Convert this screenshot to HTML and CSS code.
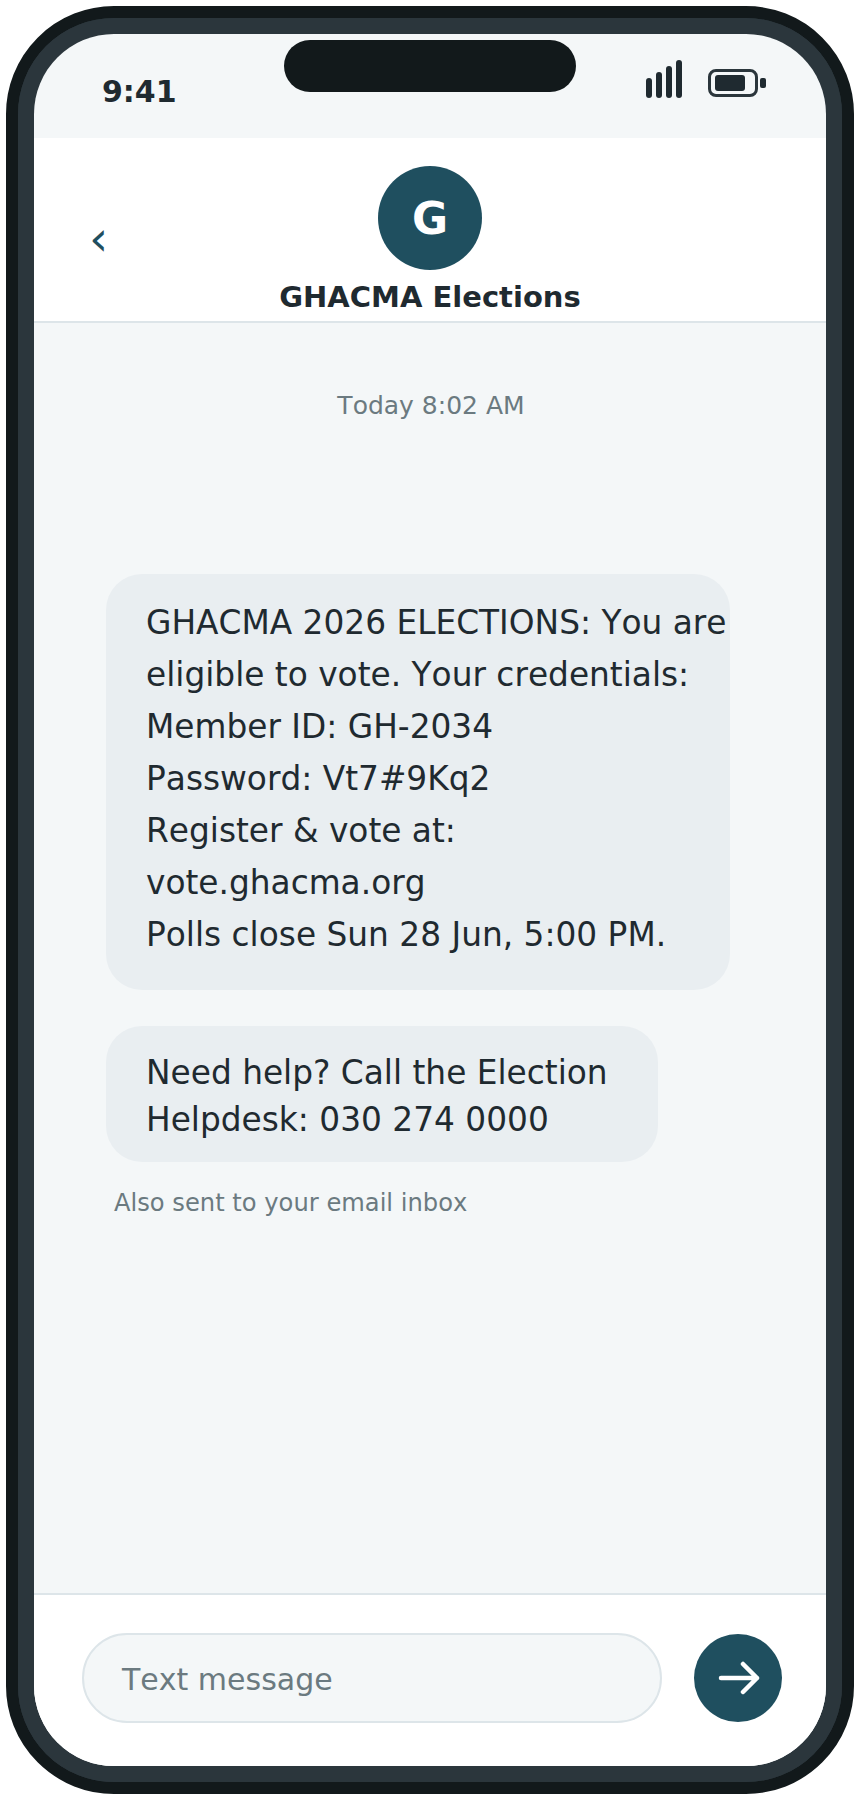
FILE: index.html
```html
<!DOCTYPE html>
<html lang="en">
<head>
  <meta charset="UTF-8" />
  <meta name="viewport" content="width=device-width, initial-scale=1.0"/>
  <title>GHACMA Elections SMS</title>
  <link rel="stylesheet" href="styles.css">
</head>
<body>
  <div class="phone">
    <div class="bezel">
      <div class="screen">
        <div class="notch"></div>

        <div class="status-bar">
          <span class="clock">9:41</span>
          <div class="status-icons">
            <div class="signal">
              <span class="signal-bar s1"></span>
              <span class="signal-bar s2"></span>
              <span class="signal-bar s3"></span>
              <span class="signal-bar s4"></span>
            </div>
            <div class="battery">
              <div class="battery-body"><div class="battery-level"></div></div>
              <div class="battery-tip"></div>
            </div>
          </div>
        </div>

        <div class="chat-header">
          <span class="back">‹</span>
          <div class="contact">
            <div class="avatar">G</div>
            <div class="contact-name">GHACMA Elections</div>
          </div>
        </div>

        <div class="thread">
          <div class="timestamp">Today 8:02 AM</div>
          <div class="bubble bubble-main">
            GHACMA 2026 ELECTIONS: You are<br>
            eligible to vote. Your credentials:<br>
            Member ID: GH-2034<br>
            Password: Vt7#9Kq2<br>
            Register &amp; vote at:<br>
            vote.ghacma.org<br>
            Polls close Sun 28 Jun, 5:00 PM.
          </div>
          <div class="bubble bubble-help">
            Need help? Call the Election<br>
            Helpdesk: 030 274 0000
          </div>
          <div class="note">Also sent to your email inbox</div>
        </div>

        <div class="composer">
          <div class="message-input">Text message</div>
          <div class="send">
            <svg width="44" height="36" viewBox="0 0 44 36" fill="none" stroke="#fff" stroke-width="4.5" stroke-linecap="round" stroke-linejoin="round">
              <path d="M5 18H41M27 4L41 18L27 32"/>
            </svg>
          </div>
        </div>
      </div>
    </div>
  </div>
</body>
</html>
```

FILE: styles.css
```css
* {
  box-sizing: border-box;
}

body {
  margin: 0;
  background: #fff;
  font-family: 'DejaVu Sans', sans-serif;
  font-kerning: none;
  color: #1f2a30;
}

.phone {
  width: 848px;
  height: 1788px;
  margin: 6px;
  border: 12px solid #12191b;
  border-radius: 108px;
  background: #2b363c;
}

.bezel {
  height: 100%;
  border: 16px solid #2b363c;
  border-radius: 96px;
}

.screen {
  position: relative;
  display: flex;
  flex-direction: column;
  height: 100%;
  border-radius: 80px;
  overflow: hidden;
  background: #f4f7f8;
}

.notch {
  position: absolute;
  top: 6px;
  left: 250px;
  width: 292px;
  height: 52px;
  border-radius: 26px;
  background: #12191b;
}

.status-bar {
  display: flex;
  justify-content: space-between;
  height: 104px;
  padding: 26px 60px 0 68px;
  flex-shrink: 0;
}

.clock {
  margin-top: 12px;
  font-size: 30px;
  font-weight: 700;
  line-height: 40px;
}

.status-icons {
  display: flex;
  align-items: flex-end;
  gap: 26px;
  height: 38px;
}

.signal {
  display: flex;
  align-items: flex-end;
  gap: 4px;
}

.signal-bar {
  width: 6px;
  border-radius: 3px;
  background: #1f2a30;
}

.s1 { height: 20px; }
.s2 { height: 26px; }
.s3 { height: 32px; }
.s4 { height: 38px; }

.battery {
  display: flex;
  align-items: center;
  gap: 2px;
  margin-bottom: 1px;
}

.battery-body {
  width: 50px;
  height: 28px;
  padding: 3px 4px;
  border: 3px solid #2b363c;
  border-radius: 8px;
}

.battery-level {
  width: 30px;
  height: 100%;
  border-radius: 3px;
  background: #1f2a30;
}

.battery-tip {
  width: 6px;
  height: 10px;
  border-radius: 2px;
  background: #1f2a30;
}

.chat-header {
  position: relative;
  height: 185px;
  padding-top: 28px;
  flex-shrink: 0;
  background: #fff;
  border-bottom: 2px solid #dde5e9;
}

.back {
  position: absolute;
  left: 55px;
  top: 70px;
  font-size: 48px;
  line-height: 60px;
  color: #1f4f5f;
}

.contact {
  display: flex;
  flex-direction: column;
  align-items: center;
  gap: 10px;
}

.avatar {
  display: flex;
  align-items: center;
  justify-content: center;
  width: 104px;
  height: 104px;
  border-radius: 50%;
  background: #1f4f5f;
  color: #fff;
  font-size: 44px;
  font-weight: 700;
}

.contact-name {
  font-size: 29px;
  font-weight: 700;
  line-height: 34px;
}

.thread {
  display: flex;
  flex-direction: column;
  align-items: flex-start;
  flex: 1;
  padding: 67px 72px 0;
}

.timestamp {
  align-self: center;
  padding-left: 2px;
  font-size: 25px;
  line-height: 32px;
  color: #6b7a80;
}

.bubble {
  padding-left: 40px;
  border-radius: 36px;
  background: #e9eef1;
  font-size: 32.8px;
  white-space: nowrap;
}

.bubble-main {
  width: 624px;
  height: 416px;
  margin-top: 152px;
  padding-top: 23px;
  line-height: 52px;
}

.bubble-help {
  width: 552px;
  height: 136px;
  margin-top: 36px;
  padding-top: 24px;
  line-height: 47px;
}

.note {
  margin: 25px 0 0 8px;
  font-size: 24.2px;
  line-height: 32px;
  color: #6b7a80;
}

.composer {
  display: flex;
  align-items: flex-start;
  gap: 32px;
  height: 173px;
  padding: 38px 44px 0 48px;
  flex-shrink: 0;
  background: #fff;
  border-top: 2px solid #dde5e9;
}

.message-input {
  display: flex;
  align-items: center;
  flex: 1;
  height: 90px;
  padding: 2px 0 0 38px;
  border: 2px solid #dde5e9;
  border-radius: 45px;
  background: #f4f7f8;
  font-size: 30px;
  color: #6b7a80;
}

.send {
  display: flex;
  align-items: center;
  justify-content: center;
  width: 88px;
  height: 88px;
  margin-top: 1px;
  flex-shrink: 0;
  border-radius: 50%;
  background: #1f4f5f;
}
```
